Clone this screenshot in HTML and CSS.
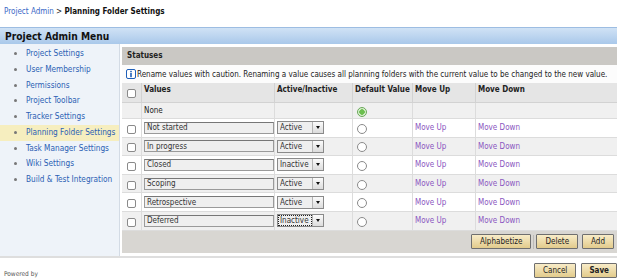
FILE: index.html
```html
<!DOCTYPE html>
<html lang="en">
<head>
    <meta charset="UTF-8">
    <title>Planning Folder Settings</title>
    <link rel="stylesheet" href="styles.css">
</head>
<body>
    <div class="crumb">
        <a href="#">Project Admin</a> &gt; <b>Planning Folder Settings</b>
    </div>
    <div class="menu-head">Project Admin Menu</div>
    <div class="admin">
        <ul class="side">
            <li><a href="#">Project Settings</a></li>
            <li><a href="#">User Membership</a></li>
            <li><a href="#">Permissions</a></li>
            <li><a href="#">Project Toolbar</a></li>
            <li><a href="#">Tracker Settings</a></li>
            <li class="current"><a href="#">Planning Folder Settings</a></li>
            <li><a href="#">Task Manager Settings</a></li>
            <li><a href="#">Wiki Settings</a></li>
            <li><a href="#">Build &amp; Test Integration</a></li>
        </ul>
        <div class="main">
            <div class="panel">
                <div class="panel-head">Statuses</div>
                <div class="note">
                    <svg class="info" width="10" height="10" viewBox="0 0 10 10">
                        <rect x="0.5" y="0.5" width="9" height="9" rx="1.5" fill="#fff" stroke="#1f5fb8"/>
                        <rect x="4.2" y="4" width="1.6" height="4.2" fill="#1f5fb8"/>
                        <rect x="4.2" y="1.8" width="1.6" height="1.5" fill="#1f5fb8"/>
                    </svg>Rename values with caution. Renaming a value causes all planning folders with the current value to be changed to the new value.
                </div>
                <table class="grid">
                    <thead>
                        <tr>
                            <th class="c-check"><input type="checkbox"></th>
                            <th class="c-value">Values</th>
                            <th class="c-active">Active/Inactive</th>
                            <th class="c-default">Default Value</th>
                            <th class="c-up">Move Up</th>
                            <th>Move Down</th>
                        </tr>
                    </thead>
                    <tbody id="rows">
                        <tr class="none-row">
                            <td></td>
                            <td class="plain">None</td>
                            <td></td>
                            <td class="c-default"><input type="radio" name="def" class="on" checked></td>
                            <td></td>
                            <td></td>
                        </tr>
                    </tbody>
                </table>
                <div class="panel-foot">
                    <button type="button">Alphabetize</button>
                    <span class="sep"></span>
                    <button type="button">Delete</button>
                    <button type="button">Add</button>
                </div>
            </div>
        </div>
    </div>
    <div class="actions">
        <button type="button">Cancel</button>
        <button type="button" class="save">Save</button>
    </div>
    <div class="powered">Powered by</div>

    <script>
        const statuses = [
            { name: 'Not started', active: true },
            { name: 'In progress', active: true },
            { name: 'Closed', active: false },
            { name: 'Scoping', active: true },
            { name: 'Retrospective', active: true },
            { name: 'Deferred', active: false }
        ];

        function loadRows() {
            const body = document.getElementById('rows');
            statuses.forEach((status, i) => {
                const row = document.createElement('tr');
                const focus = i === statuses.length - 1 ? ' focus' : '';
                row.innerHTML = `
                    <td class="c-check"><input type="checkbox"></td>
                    <td><input type="text" class="name" value="${status.name}"></td>
                    <td>
                        <span class="sel${focus}">
                            <select>
                                <option ${status.active ? 'selected' : ''}>Active</option>
                                <option ${status.active ? '' : 'selected'}>Inactive</option>
                            </select><span class="arrow"></span>
                        </span>
                    </td>
                    <td class="c-default"><input type="radio" name="def"></td>
                    <td><a href="#" class="move">Move Up</a></td>
                    <td><a href="#" class="move">Move Down</a></td>`;
                body.appendChild(row);
            });
        }

        window.onload = loadRows;
    </script>
</body>
</html>
```

FILE: styles.css
```css
body {
    margin: 0;
    padding: 0;
    font-family: 'DejaVu Sans Condensed', 'DejaVu Sans', sans-serif;
    font-size: 8px;
    color: #222;
    background-color: #fff;
}
a {
    color: #2b5fb4;
    text-decoration: none;
}
.crumb {
    padding: 7px 4px 0;
    height: 27px;
    box-sizing: border-box;
    font-size: 8px;
}
.crumb a {
    color: #3a68c6;
}
.crumb b {
    color: #111;
}
.menu-head {
    height: 17px;
    line-height: 17px;
    padding-left: 5px;
    font-size: 10.2px;
    font-weight: bold;
    color: #111;
    background: linear-gradient(#d0e2f5, #a9c8ea);
    border-top: 1px solid #9dbde2;
    box-sizing: border-box;
}
.admin {
    display: flex;
    border-bottom: 2px solid #dedede;
}
.side {
    width: 119px;
    margin: 0;
    padding: 2px 0 20px;
    list-style: none;
    background-color: #eef3f9;
    border-right: 1px solid #d3dbe5;
    font-size: 8.2px;
}
.side li {
    height: 15.75px;
    line-height: 15.75px;
    padding-left: 14px;
}
.side li::before {
    content: "";
    display: inline-block;
    width: 3px;
    height: 3px;
    border-radius: 50%;
    background-color: #777;
    margin-right: 9px;
    vertical-align: middle;
}
.side li.current {
    background-color: #f6eebf;
}
.main {
    flex: 1;
    padding: 3px 0 3px 2px;
}
.panel {
    background-color: #fff;
}
.panel-head {
    height: 18px;
    line-height: 18px;
    padding-left: 5px;
    font-weight: bold;
    font-size: 8px;
    color: #222;
    background-color: #cac8c4;
}
.note {
    height: 18px;
    display: flex;
    align-items: center;
    padding-left: 4px;
    white-space: nowrap;
    background-color: #fcfcfc;
}
.note .info {
    margin-right: 1px;
}
.grid {
    width: 100%;
    border-collapse: collapse;
}
.grid th {
    height: 19px;
    text-align: left;
    font-weight: bold;
    padding: 0 0 0 2px;
    vertical-align: top;
    line-height: 13px;
    background-color: #e5e5e5;
    border-left: 1px solid #d2d2d2;
    border-bottom: 1px solid #d2d2d2;
}
.grid th:first-child {
    border-left: none;
}
.grid td {
    height: 18.6px;
    padding: 0 0 0 2px;
    box-sizing: border-box;
    border-left: 1px solid #dcdcdc;
    border-bottom: 1px solid #dcdcdc;
}
.grid td:first-child {
    border-left: none;
}
.grid tbody tr:nth-child(odd) {
    background-color: #f0f0f0;
}
.grid .none-row td {
    height: 16px;
}
.c-check {
    width: 14px;
}
.c-value {
    width: 130px;
}
.c-active {
    width: 75px;
}
.c-default {
    width: 57px;
}
.c-up {
    width: 60px;
}
td.c-default {
    padding-left: 4px;
}
th.c-check,
td.c-check {
    padding-left: 5px;
}
.grid input[type="checkbox"] {
    appearance: none;
    width: 9px;
    height: 9px;
    margin: 3px 0 0;
    border: 1px solid #8a8a8a;
    border-radius: 2px;
    background-color: #fff;
    vertical-align: middle;
}
.grid th input[type="checkbox"] {
    margin-top: 6px;
}
.grid input[type="radio"] {
    appearance: none;
    width: 10px;
    height: 10px;
    margin: 2px 0 0;
    border: 1px solid #8a8a8a;
    border-radius: 50%;
    background-color: #fff;
    vertical-align: middle;
}
.grid input[type="radio"].on {
    border-color: #6aa85a;
    background: radial-gradient(circle, #6bbf4e 0 2.5px, #d9efcf 3px);
}
.name {
    width: 130px;
    height: 12px;
    margin: 0;
    padding: 0 2px;
    box-sizing: border-box;
    border: 1px solid #9a9a9a;
    border-top-color: #777;
    background-color: #efefef;
    font-family: inherit;
    font-size: 8px;
    color: #333;
    vertical-align: middle;
}
.sel {
    display: inline-flex;
    height: 13px;
    margin-left: 0;
    vertical-align: middle;
    border: 1px solid #8a8a8a;
    box-sizing: border-box;
    background-color: #efefef;
}
.sel select {
    appearance: none;
    width: 34px;
    height: 11px;
    padding: 0 0 0 2px;
    border: none;
    background: transparent;
    font-family: inherit;
    font-size: 8px;
    color: #333;
}
.sel.focus select {
    outline: 1px dotted #222;
    outline-offset: -1px;
}
.sel .arrow {
    width: 10px;
    height: 11px;
    background: linear-gradient(#fbfbfb, #dcdcdc);
    border-left: 1px solid #b5b5b5;
    display: flex;
    align-items: center;
    justify-content: center;
}
.sel .arrow::after {
    content: "";
    border-left: 2.5px solid transparent;
    border-right: 2.5px solid transparent;
    border-top: 3px solid #111;
}
.move {
    color: #8a55c0;
}
.plain {
    color: #222;
}
.panel-foot {
    height: 22px;
    display: flex;
    align-items: center;
    justify-content: flex-end;
    padding-right: 3px;
    background-color: #d8d6d2;
}
.panel-foot .sep {
    width: 1px;
    height: 14px;
    margin: 0 2px;
    background-color: #bcbab6;
}
button {
    height: 15px;
    padding: 0 8px;
    margin-left: 4px;
    font-family: inherit;
    font-size: 8px;
    color: #222;
    background: linear-gradient(#f8ecc8, #e2cb8c);
    border: 1px solid #6f6f6f;
    border-radius: 1px;
    cursor: pointer;
}
.panel-foot button:first-child,
.panel-foot .sep + button {
    margin-left: 0;
}
.actions {
    display: flex;
    justify-content: flex-end;
    padding: 5px 0 0 0;
}
.actions .save {
    font-weight: bold;
    margin-left: 5px;
    padding: 0 7px;
}
.powered {
    padding: 0 4px;
    font-size: 6.5px;
    line-height: 7px;
    color: #555;
    margin-top: -7px;
}
```
